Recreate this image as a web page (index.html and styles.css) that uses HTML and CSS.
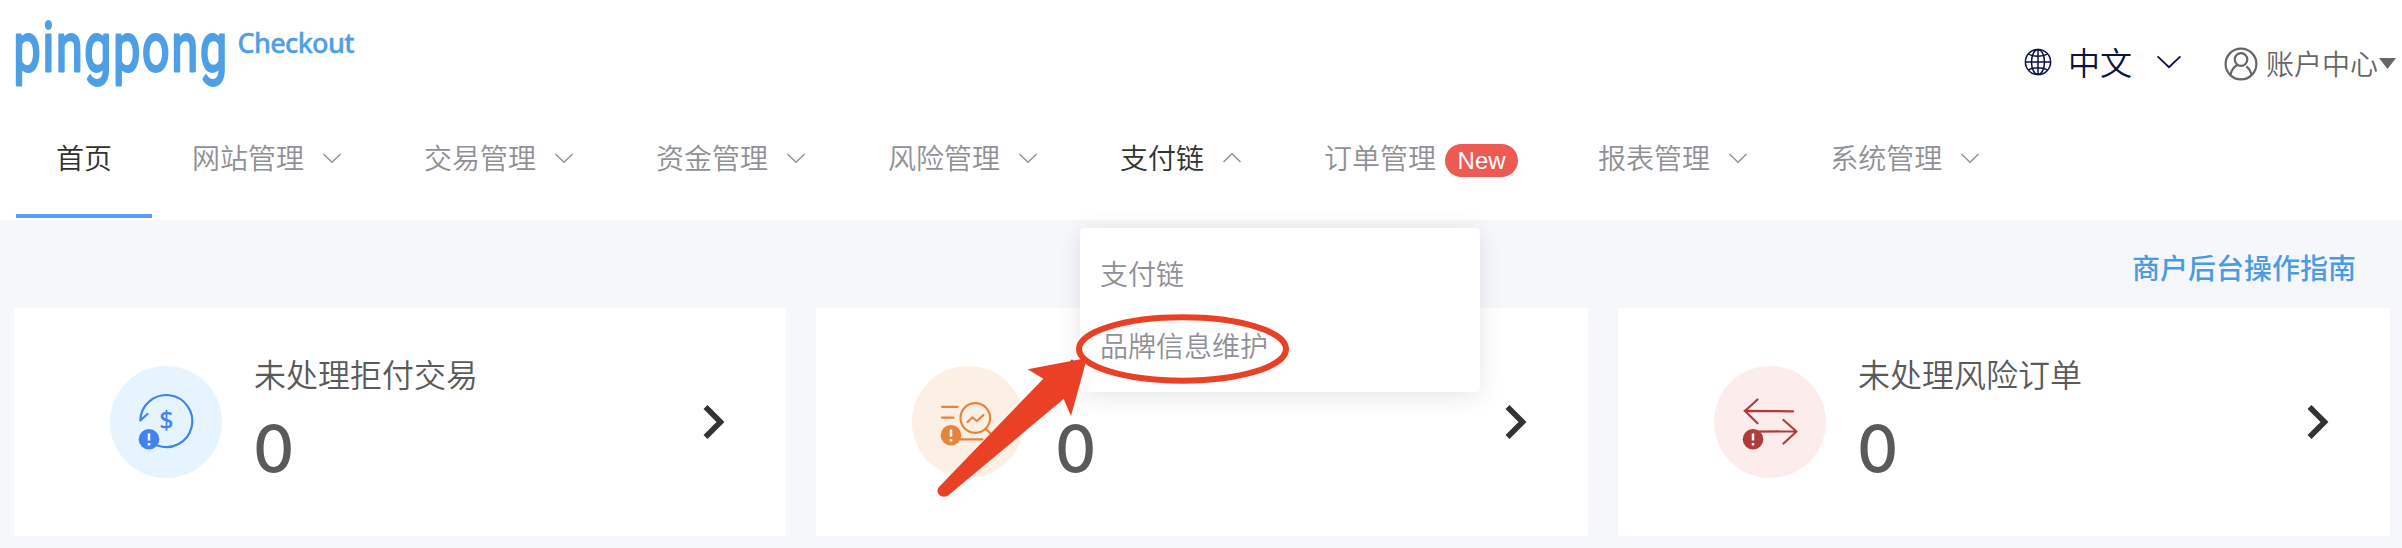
FILE: index.html
```html
<!DOCTYPE html>
<html lang="zh-CN">
<head>
<meta charset="utf-8">
<title>pingpong Checkout</title>
<link rel="stylesheet" href="styles.css">
</head>
<body>
<svg class="defs" width="0" height="0">
  <symbol id="chevron" viewBox="0 0 24 24"><path d="M3.5 8l8.500 8.300L20.500 8" fill="none" stroke="currentColor" stroke-width="1.400"/></symbol>
  <symbol id="next" viewBox="0 0 24 36"><path d="M4.500 3l15 15-15 15" fill="none" stroke="currentColor" stroke-width="5.600"/></symbol>
</svg>
<header class="header">
  <div class="topbar">
    <svg class="logo" width="360" height="100" viewBox="0 0 360 100" role="img">
      <text class="logo-name" transform="translate(13.500 71) scale(.7 1)" textLength="305">pingpong</text>
      <text class="logo-sub" x="237.500" y="52.500" textLength="117">Checkout</text>
    </svg>
    <div class="tools">
      <div class="language">
        <svg width="28" height="28" viewBox="0 0 28 28" fill="none" stroke="currentColor" stroke-width="1.500">
          <circle cx="14" cy="14" r="12.600"/><ellipse cx="14" cy="14" rx="6.500" ry="12.600"/>
          <path d="M14 1v26M1.400 14h25.200M4.500 6.200c5 2.600 14 2.600 19 0M4.500 21.800c5-2.600 14-2.600 19 0"/>
        </svg>
        <span>中文</span>
        <svg class="language-arrow" width="26" height="14" viewBox="0 0 26 14" fill="none" stroke="currentColor" stroke-width="1.800"><path d="M1.600 1.300L13 12.200 24.400 1.300"/></svg>
      </div>
      <div class="account">
        <svg width="34" height="34" viewBox="0 0 34 34" fill="none" stroke="currentColor" stroke-width="2.200">
          <circle cx="17" cy="17" r="15.400"/><circle cx="17" cy="12.500" r="6.300"/><path d="M6.500 28c.8-5 3.300-8 6.700-10M27.500 28c-.9-4-2.600-6.800-5.200-8.600"/>
        </svg>
        <span>账户中心</span><i class="caret"></i>
      </div>
    </div>
  </div>
  <nav class="nav">
    <a class="nav-item active">首页</a>
    <a class="nav-item">网站管理<svg class="chev"><use href="#chevron"/></svg></a>
    <a class="nav-item">交易管理<svg class="chev"><use href="#chevron"/></svg></a>
    <a class="nav-item">资金管理<svg class="chev"><use href="#chevron"/></svg></a>
    <a class="nav-item">风险管理<svg class="chev"><use href="#chevron"/></svg></a>
    <div class="nav-item open"><span>支付链</span><svg class="chev up"><use href="#chevron"/></svg>
      <div class="dropdown"><a>支付链</a><a>品牌信息维护</a></div>
    </div>
    <a class="nav-item">订单管理<b class="badge">New</b></a>
    <a class="nav-item">报表管理<svg class="chev"><use href="#chevron"/></svg></a>
    <a class="nav-item">系统管理<svg class="chev"><use href="#chevron"/></svg></a>
  </nav>
</header>
<main>
  <div class="guide"><a>商户后台操作指南</a></div>
  <section class="cards">
    <article class="card">
      <svg class="icon blue" viewBox="0 0 112 112">
        <path class="line" d="M30.300 54.500A26 26 0 1 1 47.500 79.500M30.300 54.500l7.200-6.500"/>
        <text class="dollar" x="56.300" y="62.500" text-anchor="middle">$</text>
        <circle class="dot" cx="39" cy="73.300" r="10.300"/><path class="mark" d="M39 67.500v7M39 77v2.500"/>
      </svg>
      <div class="info"><h3>未处理拒付交易</h3><strong>0</strong></div>
      <svg class="next"><use href="#next"/></svg>
    </article>
    <article class="card">
      <svg class="icon orange" viewBox="0 0 112 112">
        <path class="line" d="M30 40.800h15.500M30 51.700h11.500M48 73.300h22.500M74 63l8 8M55.500 56l5-4.500 4.500 3.500 6.500-6"/>
        <circle class="line" cx="63.300" cy="52" r="14.800"/>
        <circle class="dot" cx="39" cy="69.300" r="10.300"/><path class="mark" d="M39 63.500v7M39 73v2.500"/>
      </svg>
      <div class="info"><h3>未</h3><strong>0</strong></div>
      <svg class="next"><use href="#next"/></svg>
    </article>
    <article class="card">
      <svg class="icon red" viewBox="0 0 112 112">
        <path class="line" d="M79 45.300L30.500 44.800M43.500 33.500L31 45l12.500 12.200M42 65.700l40-.4M69.500 54L82.500 65.500 69.500 77.500"/>
        <circle class="dot" cx="39" cy="73.300" r="10.300"/><path class="mark" d="M39 67.500v7M39 77v2.500"/>
      </svg>
      <div class="info"><h3>未处理风险订单</h3><strong>0</strong></div>
      <svg class="next"><use href="#next"/></svg>
    </article>
  </section>
</main>
<svg class="annotation" width="2402" height="548" viewBox="0 0 2402 548">
  <ellipse cx="1182.500" cy="349" rx="103.500" ry="31.700" fill="none" stroke="#ea4025" stroke-width="6"/>
  <path d="M1087 358L1027.700 369.300 1043.300 378.700 938.500 487.500C935 493 941 499 947.500 496L1063.700 399 1071 416z" fill="#ea4025"/>
</svg>
</body>
</html>
```
FILE: styles.css
```css
* { box-sizing: border-box; }
body { margin: 0; width: 2402px; height: 548px; overflow: hidden; position: relative; background: #f5f7fb; font-family: "Noto Sans CJK SC", sans-serif; font-size: 28px; font-weight: 350; }
.defs { position: absolute; }
.header { height: 220px; background: #fff; }
.topbar { height: 100px; display: flex; justify-content: space-between; padding-right: 6px; }
.logo { display: block; }
.logo-name { font: 400 69px Roboto, sans-serif; fill: #4e9fe4; stroke: #4e9fe4; stroke-width: 2.800; stroke-linejoin: round; }
.logo-sub { font: 500 27px "Noto Sans", sans-serif; fill: #4e9fe4; stroke: #4e9fe4; stroke-width: .4; }
.tools { display: flex; align-items: flex-start; }
.language { display: flex; align-items: center; height: 48px; margin-top: 38px; color: #0b1146; font-size: 32px; font-weight: 350; line-height: 46px; }
.language span { margin-left: 16px; margin-top: -2px; }
.language-arrow { margin-left: 24px; }
.account { display: flex; align-items: center; height: 48px; margin-top: 40px; margin-left: 42px; color: #666; line-height: 46px; }
.account span { margin-left: 8px; margin-top: -2px; }
.caret { width: 17px; height: 11px; background: #666; clip-path: polygon(0 0, 100% 0, 50% 100%); margin: -1px 0 0 1px; }
.nav { height: 120px; padding-left: 16px; display: flex; color: #8f9096; }
.nav-item { position: relative; display: flex; align-items: center; height: 118px; padding: 0 40px 4px; white-space: nowrap; }
.active { color: #303133; border-bottom: 4px solid #5a9cf8; padding-bottom: 0; }
.open span { color: #303133; }
.chev { width: 24px; height: 24px; margin: 2px 0 0 16px; }
.up { transform: rotate(180deg); }
.badge { width: 73px; height: 33px; margin-left: 9px; margin-top: 7px; border-radius: 17px; background: #ec5a53; color: #fff; font: 400 24px/34px "Liberation Sans", sans-serif; text-align: center; }
.dropdown { position: absolute; left: 0; top: 128px; width: 400px; height: 164px; padding: 9px 20px; border-radius: 4px; background: #fff; box-shadow: 0 4px 24px rgba(0,0,0,.1); }
.dropdown a { display: block; height: 72px; line-height: 72px; }
.guide { height: 88px; padding: 23px 46px 0 0; text-align: right; line-height: 48px; color: #4a9ce2; font-weight: 500; }
.cards { display: flex; gap: 30px; padding: 0 12px 0 14px; }
.card { width: 772px; height: 228px; background: #fff; display: flex; padding: 0 61px 0 96px; align-items: center; }
.icon { width: 112px; height: 112px; border-radius: 50%; }
.blue { background: #e5f4fe; color: #4083f1; }
.orange { background: #fcefe3; color: #e6833d; }
.red { background: #fdecec; color: #b03c39; }
.line { fill: none; stroke: currentColor; stroke-width: 2.200; stroke-linecap: round; stroke-linejoin: round; }
.dollar { font: 500 25px "Noto Sans", sans-serif; fill: currentColor; }
.dot { fill: currentColor; }
.mark { stroke: #fff; stroke-width: 2.500; }
.info { height: 228px; margin-left: 32px; padding-top: 41px; color: #5a5a5a; }
.info h3 { margin: 0; font-size: 32px; line-height: 48px; font-weight: 350; }
.info strong { display: block; font: 500 64px/80px Inter, sans-serif; margin: 12px 0 0 -1px; }
.next { width: 24px; height: 36px; margin-left: auto; color: #333; }
.annotation { position: absolute; left: 0; top: 0; pointer-events: none; }
```
